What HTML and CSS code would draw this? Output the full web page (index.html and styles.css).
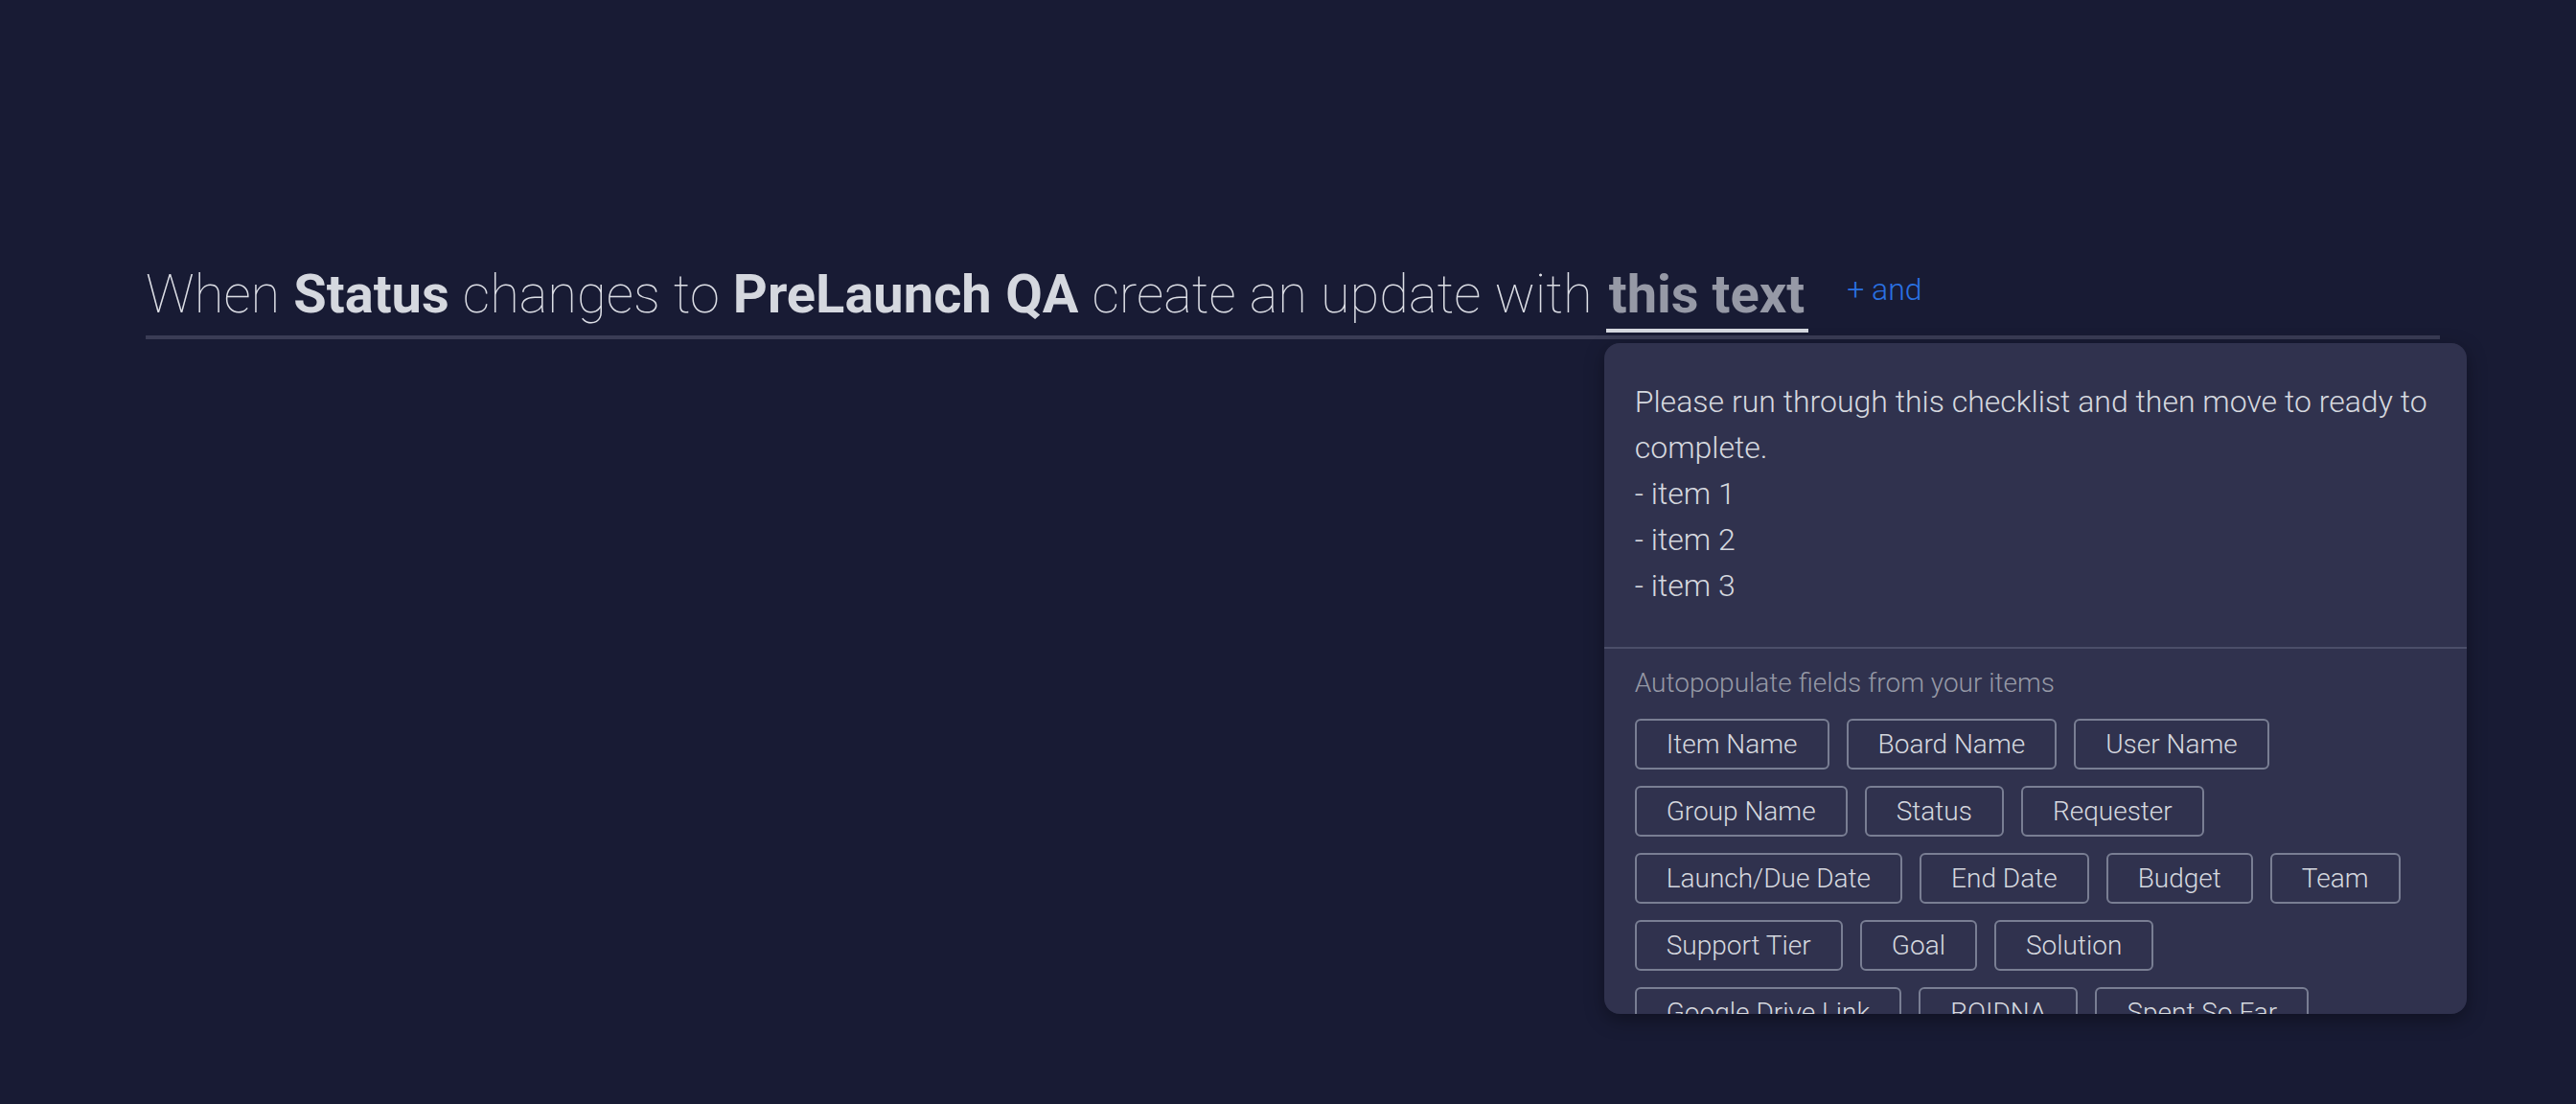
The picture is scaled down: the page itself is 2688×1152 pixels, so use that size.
FILE: index.html
```html
<!DOCTYPE html>
<html lang="en">
<head>
<meta charset="utf-8">
<title>Automation recipe</title>
<link rel="stylesheet" href="styles.css">
</head>
<body>
<div class="page">
  <div class="rule">
    <div class="sentence">When <b>Status</b> changes to <b>PreLaunch QA</b> create an update with <span class="field">this text<div class="popover">
        <div class="editor">Please run through this checklist and then move to ready to complete.<br>- item 1<br>- item 2<br>- item 3</div>
        <div class="fields">
          <div class="fields-label">Autopopulate fields from your items</div>
          <div class="chips">
            <span class="chip">Item Name</span>
            <span class="chip">Board Name</span>
            <span class="chip">User Name</span>
            <span class="chip">Group Name</span>
            <span class="chip">Status</span>
            <span class="chip">Requester</span>
            <span class="chip">Launch/Due Date</span>
            <span class="chip">End Date</span>
            <span class="chip">Budget</span>
            <span class="chip">Team</span>
            <span class="chip">Support Tier</span>
            <span class="chip">Goal</span>
            <span class="chip">Solution</span>
            <span class="chip">Google Drive Link</span>
            <span class="chip">ROIDNA</span>
            <span class="chip">Spent So Far</span>
          </div>
        </div>
      </div></span></div>
    <span class="and">+ and</span>
  </div>
</div>
</body>
</html>
```

FILE: styles.css
```css
html, body {
  margin: 0;
  padding: 0;
  background: #181b34;
}

body {
  font-family: Roboto, "Noto Sans", "Liberation Sans", sans-serif;
  color: #d5d8df;
  width: 2688px;
  height: 1152px;
  overflow: hidden;
}

.page {
  padding: 274px 142px 0 152px;
}

.rule {
  display: flex;
  align-items: flex-start;
  border-bottom: 4px solid #3a3c55;
  padding-bottom: 3px;
}

.sentence {
  font-size: 56px;
  font-weight: 100;
  line-height: 1.2;
  word-spacing: 0.6px;
  color: #dcdee5;
  white-space: nowrap;
}

.sentence b {
  font-weight: 700;
  color: #d5d8df;
}

.field {
  position: relative;
  display: inline-block;
  font-weight: 700;
  word-spacing: 0;
  color: #9699a6;
  padding: 0 4px 2px 3px;
  border-bottom: 4px solid #d5d8df;
}

.and {
  margin-left: 40px;
  margin-top: 9px;
  font-size: 32px;
  font-weight: 300;
  line-height: 1.2;
  color: #2a71e2;
}

.popover {
  position: absolute;
  left: -2px;
  top: calc(100% + 15px);
  width: 900px;
  height: 700px;
  box-sizing: border-box;
  background: #30324e;
  border-radius: 16px;
  overflow: hidden;
  box-shadow: 0 6px 20px rgba(0, 0, 0, 0.35);
  white-space: normal;
  word-spacing: 0;
  font-weight: 300;
  color: #d5d8df;
  z-index: 2;
}

.editor {
  padding: 37px 32px 40px;
  font-size: 32px;
  line-height: 48px;
  font-weight: 300;
  border-bottom: 2px solid #4b4e69;
}

.fields {
  padding: 16px 32px 0;
}

.fields-label {
  font-size: 28px;
  line-height: 40px;
  color: #9699a6;
  margin-bottom: 17px;
}

.chips {
  display: flex;
  flex-wrap: wrap;
  gap: 17px 18px;
}

.chip {
  display: flex;
  align-items: center;
  height: 53px;
  box-sizing: border-box;
  padding: 0 31px;
  border: 2px solid #797e93;
  border-radius: 6px;
  font-size: 28px;
  font-weight: 300;
  color: #d5d8df;
  white-space: nowrap;
}
```
